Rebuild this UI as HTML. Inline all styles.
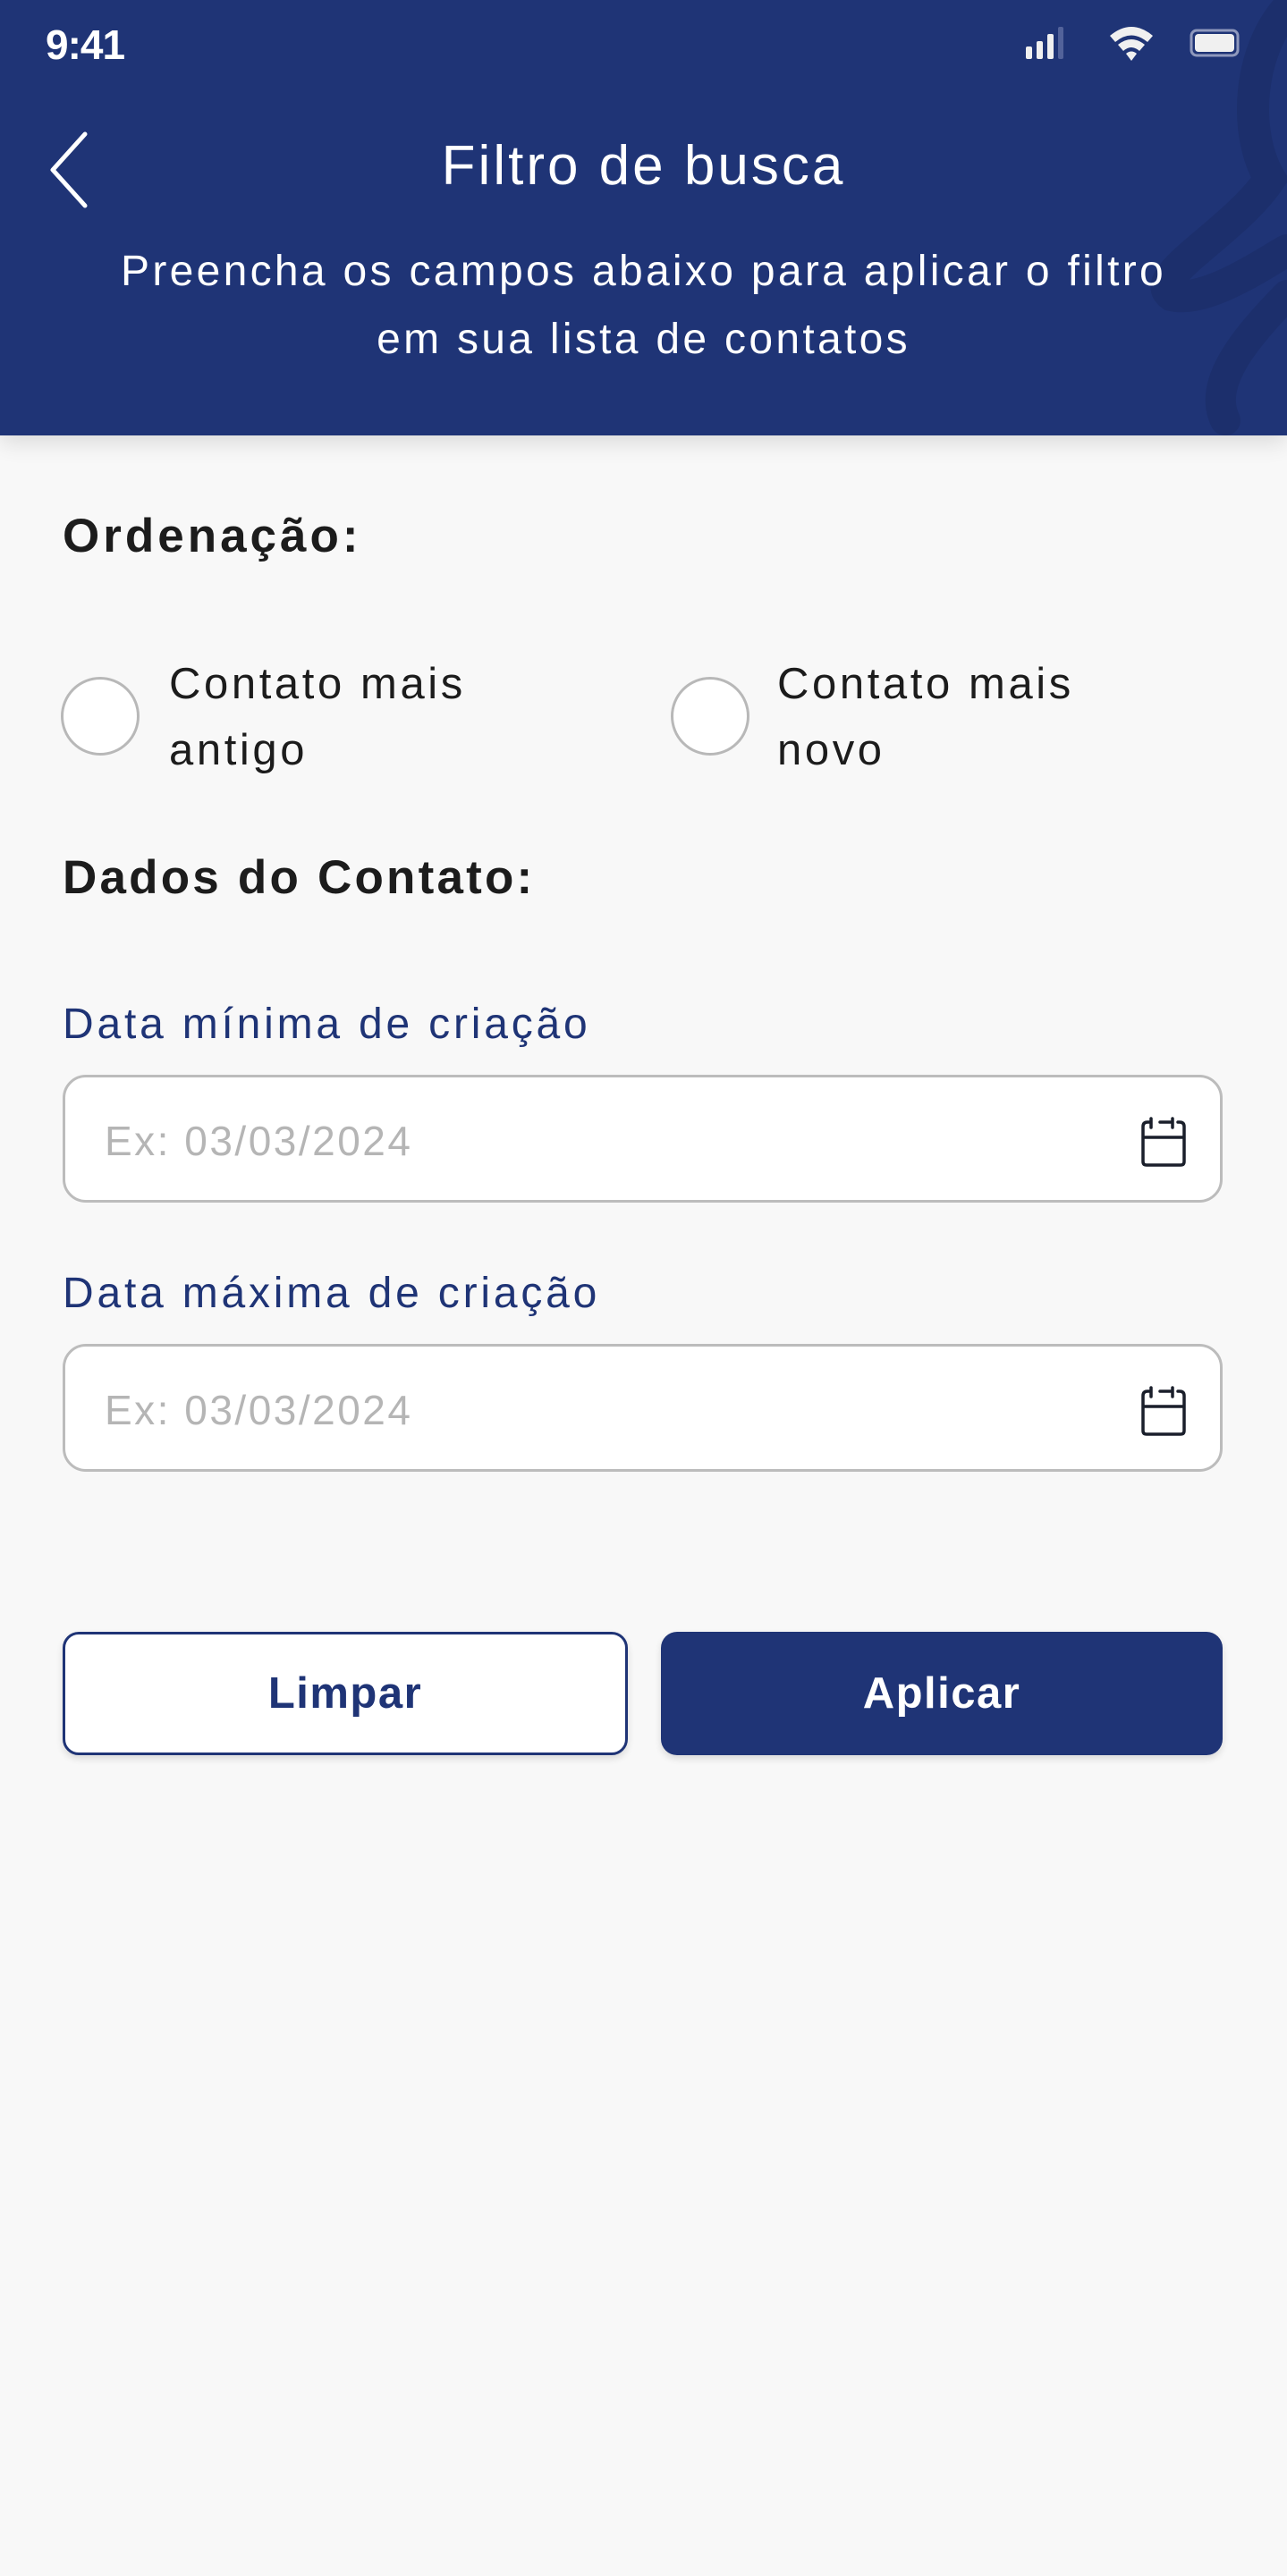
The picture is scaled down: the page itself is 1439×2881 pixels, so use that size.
<!DOCTYPE html>
<html><head><meta charset="utf-8"><style>
*{margin:0;padding:0;box-sizing:border-box}
body{width:1439px;height:2881px;background:#f8f8f8;font-family:"Liberation Sans",sans-serif;position:relative;overflow:hidden}
.hdr{position:absolute;left:0;top:0;width:1439px;height:487px;background:#1f3476;box-shadow:0 8px 24px rgba(0,0,0,.12);overflow:hidden}
.t{position:absolute;white-space:nowrap}
.radio{position:absolute;width:88px;height:88px;border:3px solid #b8b8b8;border-radius:50%;background:#fff}
.inp{position:absolute;left:70px;width:1297px;height:143px;border:3px solid #bcbcbc;border-radius:26px;background:#fff}
.ph{position:absolute;left:44px;top:44px;font-size:46px;color:#b5b5b5;letter-spacing:2.5px}
.lbl{font-size:48px;color:#1f3476;letter-spacing:3.8px}
.sec{font-size:53px;font-weight:bold;color:#1c1c1c}
.opt{font-size:49px;color:#1c1c1c;line-height:74px;letter-spacing:3.6px}
.btn{position:absolute;top:1825px;height:138px;border-radius:18px;display:flex;align-items:center;justify-content:center;font-size:49px;font-weight:bold;letter-spacing:1.5px;box-shadow:0 4px 8px rgba(0,0,0,.12)}
</style></head><body>
<div class="hdr">
<svg width="1439" height="487" style="position:absolute;left:0;top:0">
<path d="M1439 10 C1395 60 1390 150 1420 200 C1380 260 1280 310 1310 330 C1350 340 1420 290 1439 280" fill="none" stroke="#1c2f6c" stroke-width="36" stroke-linecap="round"/>
<path d="M1439 330 C1390 380 1350 430 1370 470" fill="none" stroke="#1c2f6c" stroke-width="34" stroke-linecap="round"/>
</svg>
<div class="t" style="left:51px;top:23px;font-size:46px;font-weight:bold;color:#fff;letter-spacing:-1px">9:41</div>
<svg width="260" height="50" style="position:absolute;left:1145px;top:28px">
<rect x="2" y="24" width="7" height="14" rx="2" fill="#f0f0f0"/>
<rect x="14" y="18" width="7" height="20" rx="2" fill="#f0f0f0"/>
<rect x="26" y="10" width="7" height="28" rx="2" fill="#f0f0f0"/>
<rect x="38" y="2" width="6" height="36" rx="2" fill="#52629a"/>
<path d="M96 12 Q120 -8 144 12 L138 19 Q120 4 102 19Z" fill="#f0f0f0"/>
<path d="M105 22 Q120 10 135 22 L129 29 Q120 21 111 29Z" fill="#f0f0f0"/>
<path d="M114 32 Q120 27 126 32 L120 40Z" fill="#f0f0f0"/>
<rect x="187" y="6" width="52" height="28" rx="6" fill="none" stroke="#8f99bd" stroke-width="3"/>
<rect x="191" y="10" width="44" height="20" rx="4" fill="#f0f0f0"/>
</svg>
<svg width="60" height="90" style="position:absolute;left:45px;top:145px">
<path d="M50 5 L14 45 L50 85" fill="none" stroke="#fff" stroke-width="5" stroke-linecap="round" stroke-linejoin="round"/>
</svg>
<div class="t" style="left:0;width:1439px;text-align:center;top:150px;font-size:62px;color:#fff;letter-spacing:3px">Filtro de busca</div>
<div class="t" style="left:0;width:1439px;text-align:center;top:266px;font-size:48px;color:#fff;line-height:76px;letter-spacing:3.3px">Preencha os campos abaixo para aplicar o filtro<br>em sua lista de contatos</div>
</div>

<div class="t sec" style="left:70px;top:569px;letter-spacing:4px">Ordenação:</div>
<div class="radio" style="left:68px;top:757px"></div>
<div class="t opt" style="left:189px;top:728px">Contato mais<br>antigo</div>
<div class="radio" style="left:750px;top:757px"></div>
<div class="t opt" style="left:869px;top:728px">Contato mais<br>novo</div>

<div class="t sec" style="left:70px;top:951px;letter-spacing:3.2px">Dados do Contato:</div>

<div class="t lbl" style="left:70px;top:1118px">Data mínima de criação</div>
<div class="inp" style="top:1202px"><div class="ph">Ex: 03/03/2024</div>
<svg width="56" height="60" style="position:absolute;left:1200px;top:42px"><path d="M14 8 H10 Q5 8 5 13 V52 Q5 56 9 56 H47 Q51 56 51 52 V13 Q51 8 46 8 H44 M5 25 H51 M14 4 V14 M24 8 H38 M38 4 V14" fill="none" stroke="#1a1f2b" stroke-width="3.5" stroke-linecap="round"/></svg></div>

<div class="t lbl" style="left:70px;top:1419px">Data máxima de criação</div>
<div class="inp" style="top:1503px"><div class="ph">Ex: 03/03/2024</div>
<svg width="56" height="60" style="position:absolute;left:1200px;top:42px"><path d="M14 8 H10 Q5 8 5 13 V52 Q5 56 9 56 H47 Q51 56 51 52 V13 Q51 8 46 8 H44 M5 25 H51 M14 4 V14 M24 8 H38 M38 4 V14" fill="none" stroke="#1a1f2b" stroke-width="3.5" stroke-linecap="round"/></svg></div>

<div class="btn" style="left:70px;width:632px;background:#fff;border:3px solid #1f3476;color:#1f3476">Limpar</div>
<div class="btn" style="left:739px;width:628px;background:#1f3476;color:#fff">Aplicar</div>
</body></html>
